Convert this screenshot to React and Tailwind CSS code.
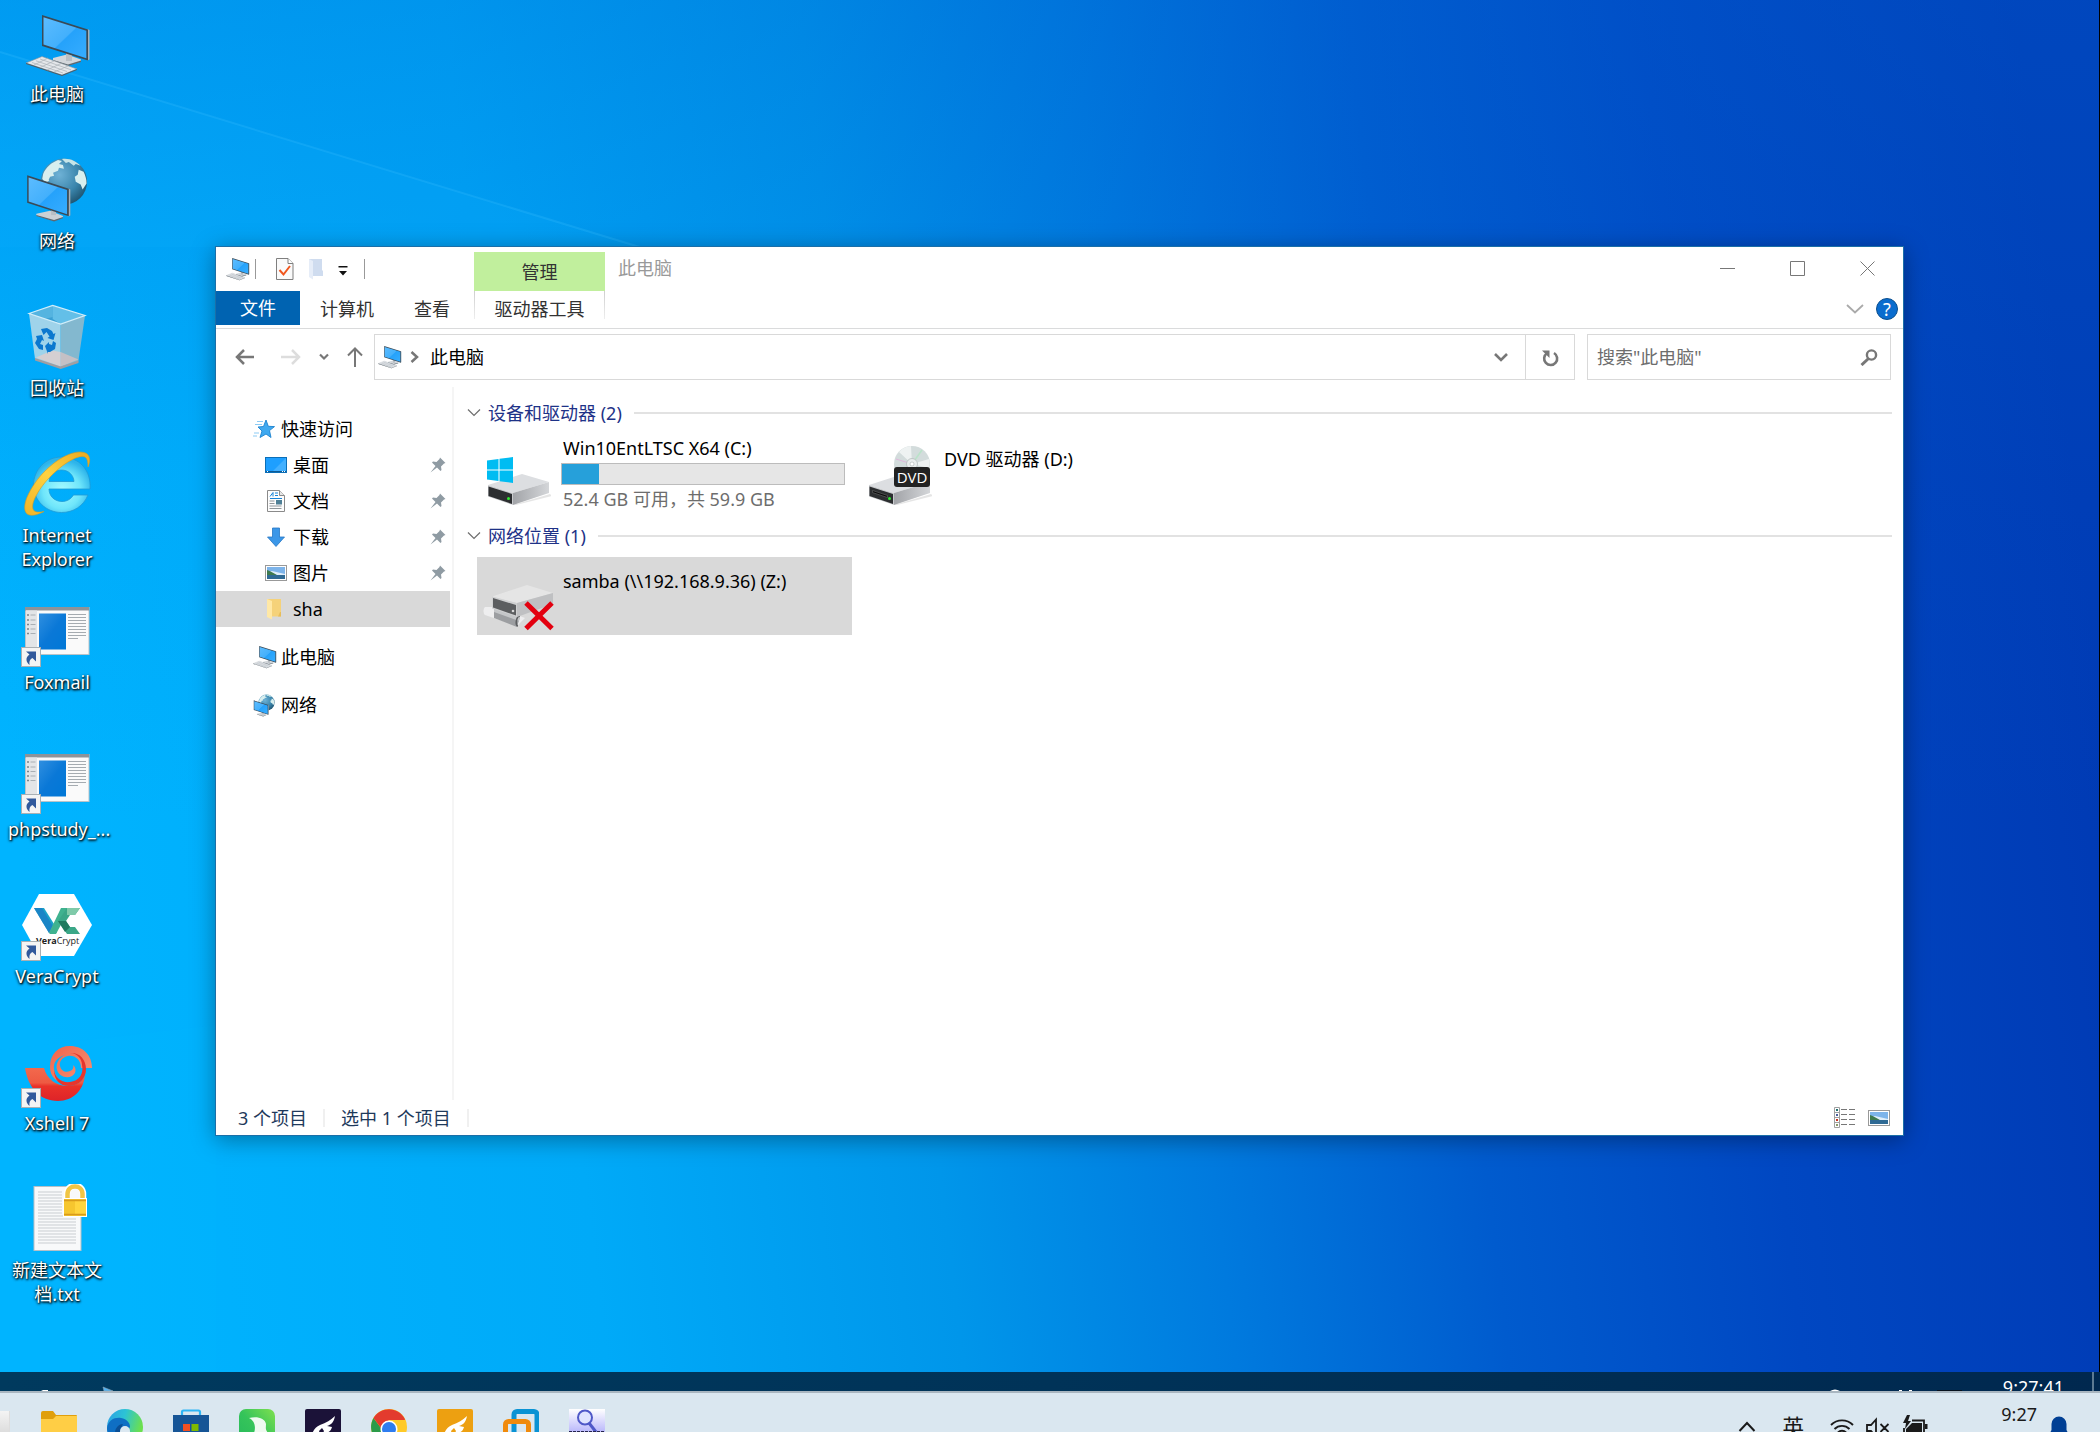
import React from "react";

const PcIcon = ({ className }) => (
  <svg viewBox="4 4 66 64" className={className} aria-hidden="true">
    <defs>
      <linearGradient id="screen" x1="0" y1="0" x2="1" y2="1">
        <stop offset="0" stopColor="#5cbcff" />
        <stop offset="0.5" stopColor="#43b0fc" />
        <stop offset="0.52" stopColor="#25a2fb" />
        <stop offset="1" stopColor="#37adff" />
      </linearGradient>
    </defs>
    <path d="M32 49l14-3.500 14 5v2l-13 4-15-5z" fill="#d3d7db" />
    <path d="M32 51l15 4.500 13-4v1.500l-13 4-15-4.500z" fill="#5d6870" />
    <path d="M45 44h6v8h-6z" fill="#b9bfc4" />
    <path d="M66 20l2.500 1v29.500l-2.500 1z" fill="#a8b0b6" />
    <path d="M21 6l46 14.500v31L21 37z" fill="#3a4a56" />
    <path d="M22.500 8.200L65.300 21.700v27.500L22.500 35.600z" fill="url(#screen)" />
    <path d="M5 54l16-6.500 35 12.500-15 6z" fill="#e4e7ea" stroke="#8b949b" strokeWidth="0.6" />
    <path d="M5 54l36 12 15-6v1l-15 6-36-12z" fill="#4f5a62" />
    <path d="M11 53.500l31 10.500M15 51.800l31 10.700M19 50l31 10.800M13 56l14-7M19 58.500l14-6.500M26 61l14-6.500M33 63l14-6" stroke="#a9b0b6" strokeWidth="0.7" fill="none" />
  </svg>
);

const NetworkIcon = ({ className }) => (
  <svg viewBox="5 2 66 67" className={className} aria-hidden="true">
    <defs>
      <radialGradient id="globe" cx="0.4" cy="0.35" r="0.7">
        <stop offset="0" stopColor="#6fb2d6" />
        <stop offset="0.6" stopColor="#3b86ad" />
        <stop offset="1" stopColor="#1d526e" />
      </radialGradient>
    </defs>
    <circle cx="44" cy="27" r="23.500" fill="url(#globe)" />
    <path d="M23 19c3-7 8-11 15-14l4 1-3 3 4 1 1 4-5-1-1 3-5 2 1 3-4 1-2 4-4 1-2-3z" fill="#d8efef" />
    <path d="M42 4c8-1 14 2 19 7l-5-2-2 2-5-4-3 1z" fill="#c6e5e8" />
    <path d="M59 15l5 2c2 4 3 8 3 12l-4 6-2-5-5-3-1-5 3-2z" fill="#d8efef" />
    <path d="M23 24l4-1 2 3-3 2z" fill="#d8efef" />
    <path d="M16 59.500l14-3 13 5.500v1.500l-9 3.500-18-5.500z" fill="#ccd1d5" />
    <path d="M16 61l18 5 9-3v1.200l-9 3.300-18-5.500z" fill="#5d6870" />
    <path d="M31 55h5v6h-5z" fill="#b9bfc4" />
    <path d="M48 34l2.500 1v26.500l-2.500 1z" fill="#a8b0b6" />
    <path d="M6.700 20.500L49 34.200v28L6.700 48.500z" fill="#3a4a56" />
    <path d="M8.200 22.800l39 12.600v24.600L8.200 47.200z" fill="url(#screen)" />
  </svg>
);

const BinIcon = () => (
  <svg viewBox="0 0 72 72" className="size-full" aria-hidden="true">
    <path d="M8 11.500L31.700 3.500 64 13.500 39.700 22z" fill="#3aa0d4" />
    <path d="M8 11.500L31.700 3.500V15L20 18z" fill="#55b4e0" />
    <path d="M31.700 3.500L64 13.500 39.700 22 31.700 17z" fill="#63bfe8" />
    <path d="M8 11.500L39.700 22v44L14 57z" fill="#9fd3ea" />
    <path d="M64 13.500L39.700 22v44L57.300 59.500z" fill="#83b8cf" />
    <path d="M15 55.500L31 48.500l8.700 1.500v14.500z" fill="#d5cfd2" />
    <path d="M39.700 50L57.500 57.500 39.700 64.500z" fill="#c4c0c5" />
    <path d="M14 56l25.700 8.500 17.800-6v2.500l-17.800 6L14 58.500z" fill="#a09ea2" />
    <path d="M8 11.500L31.700 3.500 64 13.500 39.700 22z" fill="none" stroke="#d2eefa" strokeWidth="1.200" />
    <g fill="#0b78cf">
      <path d="M20 27l6-1 5 3 1.500 3 2-1-2 7-6-2 2-1.500-3-4.500-3 3z" />
      <path d="M15 34l6-1 2 6-2-1-2 4 3 1v5l-4-1-4-6 2-4z" />
      <path d="M24 44l4-4v2l3 1 1-4 3 2-1 6-5 3h-2v2z" />
    </g>
  </svg>
);

const IeIcon = () => (
  <svg viewBox="0 0 72 72" className="size-full" aria-hidden="true">
    <defs>
      <radialGradient id="ie" cx="0.5" cy="0.6" r="0.55">
        <stop offset="0" stopColor="#a8fbff" />
        <stop offset="0.6" stopColor="#6fe6fb" />
        <stop offset="1" stopColor="#2db4ea" />
      </radialGradient>
      <linearGradient id="ring" x1="0" y1="1" x2="1" y2="0">
        <stop offset="0" stopColor="#f0b429" />
        <stop offset="0.5" stopColor="#ffd23f" />
        <stop offset="1" stopColor="#e9a820" />
      </linearGradient>
    </defs>
    <path
      d="M40.500 8C25 8 12.500 20.500 12.500 36S25 63.500 40.500 63.500c12 0 22-6.500 26.500-17.500H52.500c-2.500 4-6.500 6.500-11.500 6.500-7.500 0-13-5.500-13-12.500h41C70.500 21 58 8 40.500 8zM28 32.500C28.500 25.500 34 21 40.500 21S52.500 25.500 53 32.500z"
      fill="url(#ie)"
      stroke="#1f9bd6"
      strokeWidth="0.8"
    />
    <path
      d="M67 18c3-7 2-13-4-14.500C50 0 27 15 14 34 3 50 1 62 7 65.500c4 2 10 0 16-3-5 1-9 1-10.500-1.500C9 56 16 42 28 29 42 14 58 5 64 8c2.500 1.500 3 5 3 10z"
      fill="url(#ring)"
      stroke="#d89a1c"
      strokeWidth="0.6"
    />
  </svg>
);

const ShortcutMark = () => (
  <g>
    <rect x="0.500" y="51.500" width="19" height="19" fill="#f4f4f4" stroke="#a9b0b4" />
    <path d="M5 55.500h10v10l-3.500-3.500c-2.500 1-3.500 3-3 7-3.500-3-4.500-7.500 0-10.500z" fill="#31599c" />
  </g>
);

const AppWindowIcon = () => (
  <svg viewBox="0 0 72 72" className="size-full" aria-hidden="true">
    <defs>
      <linearGradient id="pane" x1="0" y1="0" x2="1" y2="1">
        <stop offset="0" stopColor="#2f8fe0" />
        <stop offset="0.5" stopColor="#0a78d7" />
        <stop offset="1" stopColor="#0078d7" />
      </linearGradient>
    </defs>
    <rect x="4.500" y="11.500" width="63.500" height="47" fill="#fafafa" stroke="#b9c3c9" />
    <rect x="4" y="11" width="64" height="3.500" fill="#8d9399" />
    <rect x="5" y="14.500" width="11" height="43.500" fill="#e3e5e7" />
    <path d="M6 19h2M6 24h2M6 28.500h2M6 33h2M6 37.500h2" stroke="#7d858b" strokeWidth="1.600" />
    <path d="M9.500 19h5M9.500 24h5M9.500 28.500h5M9.500 33h5M9.500 37.500h5" stroke="#a9afb4" strokeWidth="1" />
    <rect x="18" y="17.500" width="27" height="36" fill="url(#pane)" />
    <path d="M47 18.500h18M47 21.500h18M47 24.500h18M47 27.500h18M47 30.500h18M47 33.500h18M47 36.500h18M47 39.500h18M47 42.500h10" stroke="#a5abb0" />
    <ShortcutMark />
  </svg>
);

const VeraIcon = () => (
  <svg viewBox="0 0 72 72" className="size-full" aria-hidden="true">
    <path d="M18 4h35l18 31-18 31H18L1 35z" fill="#fff" />
    <path d="M13 18h10l10 16-5 9z" fill="#1aa3c9" />
    <path d="M13 18l15 25h8L21 18z" fill="#1b77c4" opacity="0.7" />
    <path d="M28 43l12-25h9L35 44h-6z" fill="#3fb28f" />
    <path d="M59 18H46l-9 13 9 13h13l-5-7h-5l-4-6 4-6h5z" fill="#3aa787" />
    <path d="M46 18h13l-5 7h-8z" fill="#7fcaa9" />
    <path d="M37 31l8 0 4 6-5 5z" fill="#1f7a5e" />
    <text x="15" y="53.500" fontSize="9" fill="#222" fontFamily="Open Sans, sans-serif">
      <tspan fontWeight="700">Vera</tspan>Crypt
    </text>
    <ShortcutMark />
  </svg>
);

const XshellIcon = () => (
  <svg viewBox="0 0 72 72" className="size-full" aria-hidden="true">
    <defs>
      <linearGradient id="shell" x1="0" y1="0" x2="0" y2="1">
        <stop offset="0" stopColor="#f2694d" />
        <stop offset="0.45" stopColor="#ee5a42" />
        <stop offset="0.55" stopColor="#ea3229" />
        <stop offset="1" stopColor="#de2328" />
      </linearGradient>
      <linearGradient id="shellTop" x1="0" y1="0" x2="1" y2="1">
        <stop offset="0" stopColor="#f1634a" />
        <stop offset="1" stopColor="#f79478" />
      </linearGradient>
    </defs>
    <path d="M4 31h19c3 11 12 18 24 18 11 0 18-8 18-17l-1 3c0 18-12 29-27 29C18 64 7 50 4 31z" fill="url(#shell)" />
    <path
      d="M71 31H60c0-8-6-13-13-12-6 1-9 6-8 10 1 5 6 7 10 5 3-1 4-4 3-6 4 3 3 9-1 11-6 3-13 0-15-6-2-7 3-13 8-15-8 2-12 8-11 14 1 9 8 15 16 14-11 2-20-5-20-16C29 17 37 9 49 9c13 0 22 9 22 22z"
      fill="url(#shellTop)"
    />
    <path
      d="M33 33c1 8 8 13 16 12 9-1 14-8 12-17 0-6-5-12-12-12 9-1 16 6 16 16 0 9-7 17-17 17-9 0-15-6-15-16z"
      fill="#e8352c"
    />
    <ShortcutMark />
  </svg>
);

const TextFileIcon = () => (
  <svg viewBox="0 0 72 72" className="size-full" aria-hidden="true">
    <rect x="13" y="2.500" width="47" height="64" fill="#f8f9fa" stroke="#b5c0c7" />
    <path
      d="M17 8h24M17 11h24M17 14h24M17 17h24M17 20h24M17 23h24M17 26h24M17 29h24M17 32h38M17 35h38M17 38h38M17 41h38M17 44h38M17 47h38M17 50h38M17 53h38M17 56h38M17 59h38"
      stroke="#c9cdd1"
    />
    <path d="M46 15V10c0-11 16-11 16 0v5" fill="none" stroke="#fff" strokeWidth="6.500" />
    <path d="M46.500 16V10c0-10 15-10 15 0v6" fill="none" stroke="#f0c544" strokeWidth="4.500" />
    <rect x="42" y="14" width="24" height="19" fill="#fff" />
    <rect x="43" y="15" width="22" height="17" fill="#f6c62f" />
    <rect x="54" y="17" width="11" height="13" fill="#ffd53e" />
    <path d="M43 16.500h22M43 30.500h22" stroke="#d99b1c" strokeWidth="1.500" />
  </svg>
);

const PictureIcon = ({ className }) => (
  <svg viewBox="0 0 22 16" className={className} aria-hidden="true">
    <rect x="0.500" y="0.500" width="21" height="15" fill="#fff" stroke="#999" />
    <rect x="2" y="2" width="18" height="12" fill="#7db4ea" />
    <path d="M2 7l5-1 13 3v2H2z" fill="#dfeefa" />
    <path d="M2 5c4 1 6 3 10 5H2z" fill="#3f7a4f" />
    <path d="M2 10h18v4H2z" fill="#2f6a94" />
  </svg>
);

const StarIcon = () => (
  <svg viewBox="0 0 22 20" className="w-[22px] h-5" aria-hidden="true">
    <path d="M13 1l2.300 6.300 6.200.3-5 4 1.500 6.900-5-3.500-6 3.500 2-6.500-4-4 5.500-.5z" fill="#3fa9f0" stroke="#1c82cf" strokeWidth="0.900" />
    <path d="M4 2.500h6M2 5.500h7M1 14h5M0 17h4" stroke="#8ccbf4" strokeWidth="1" />
  </svg>
);

const DesktopIcon = () => (
  <svg viewBox="0 0 22 16" className="w-[22px] h-4" aria-hidden="true">
    <rect x="0.500" y="0.500" width="21" height="15" fill="#1e9fff" stroke="#0b6fb8" />
    <path d="M8 14L21 1v13z" fill="#43b0ff" />
    <path d="M1 14.500h20" stroke="#0d5a94" />
    <path d="M2 14.500h1M17 14.500h1M19 14.500h1" stroke="#fff" />
  </svg>
);

const DocumentIcon = () => (
  <svg viewBox="0 0 18 22" className="w-[18px] h-[22px]" aria-hidden="true">
    <path d="M.5.500h12l5 5v16H.500z" fill="#fdfdfd" stroke="#8a8a8a" />
    <path d="M12.500.500v5h5" fill="#e6e6e6" stroke="#8a8a8a" />
    <path d="M3 6.500l3-4v4M8 3h3M8 5.500h3M3 8.500h12" stroke="#1583d8" fill="none" />
    <path d="M2.500 11h5M2.500 13.500h5M2.500 16h12M2.500 18.500h12" stroke="#8f959a" />
    <rect x="9" y="10" width="6" height="4.500" fill="#4e7f96" />
  </svg>
);

const DownloadIcon = () => (
  <svg viewBox="0 0 20 20" className="size-5" aria-hidden="true">
    <path d="M6.500 1h7v9h5L10 19.500 1.500 10h5z" fill="#3b97e8" stroke="#2677c4" strokeWidth="0.800" />
  </svg>
);

const FolderIcon = () => (
  <svg viewBox="0 0 16 22" className="mr-1 w-4 h-[22px]" aria-hidden="true">
    <path d="M1 1h14v17.500H1z" fill="#f5d27a" />
    <path d="M1 1l5 2v18.500L1 19z" fill="#ffe8a6" />
    <path d="M14 14h1v4.500h-3z" fill="#e7bd5b" />
  </svg>
);

const PinIcon = () => (
  <svg viewBox="0 0 16 16" className="size-4" aria-hidden="true">
    <path d="M10 .5L15.500 6l-1.500.5-3 3 .5 3.500-1 1-3.500-3.500L.500 15.500 5.500 9 2 5.500l1-1 3.500.5 3-3z" fill="#8f9ba3" />
  </svg>
);

const DriveBody = ({ slot }) => (
  <g>
    <path d="M26 64l37-11 2 2-36 9z" fill="#000" opacity="0.1" />
    <path d="M1 44L35 33l27 8-36 11z" fill="#dcdee1" />
    <path d="M26 52l36-11v11L26 64z" fill="url(#driveSide)" />
    <path d="M1 44l25 8v12L1 55.500z" fill="#c9cbce" />
    <path d="M1.500 45.500l23.500 7.500v10l-23.500-8z" fill="#2c2e30" />
    {slot && <path d="M4.500 49.500l15 5v2l-15-5z" fill="#0a0a0a" stroke="#777" strokeWidth="0.500" />}
    <circle cx="21.500" cy="57.500" r="1.500" fill="#2ee82e" />
  </g>
);

const SystemDriveIcon = () => (
  <svg viewBox="0 0 64 64" className="size-16" aria-hidden="true">
    <defs>
      <linearGradient id="driveSide" x1="0" y1="0" x2="1" y2="0">
        <stop offset="0" stopColor="#a2a4a8" />
        <stop offset="1" stopColor="#d4d6d9" />
      </linearGradient>
    </defs>
    <DriveBody />
    <path d="M0 19.500L11.500 18v10.500H0zM12.500 17.800L26 16v12.500H12.500zM0 29.500h11.500V40L0 38.500zM12.500 29.500H26V42l-13.500-1.800z" fill="#00bcf2" />
  </svg>
);

const DvdDriveIcon = () => (
  <svg viewBox="0 0 64 64" className="size-16" aria-hidden="true">
    <DriveBody slot />
    <circle cx="44" cy="23" r="18" fill="#d3dcdc" />
    <path d="M44 23L31 11a18 18 0 0 1 12-6zM44 23l17-5a18 18 0 0 1 0 9z" fill="#eef2f2" />
    <path d="M44 23l-16-5M44 23l-14 8" stroke="#e0b8dc" strokeWidth="1" />
    <path d="M44 23l10-14" stroke="#b9e3c8" strokeWidth="1.500" />
    <circle cx="44" cy="23" r="5.500" fill="#e9eded" stroke="#b5bdbd" strokeWidth="0.800" />
    <circle cx="44" cy="23" r="2" fill="#fff" stroke="#a9b1b1" strokeWidth="0.600" />
    <rect x="26" y="26" width="36" height="20" rx="3" fill="#222" />
    <text x="44" y="41.500" textAnchor="middle" fontSize="15" fill="#fff" fontFamily="Open Sans, sans-serif">DVD</text>
  </svg>
);

const OfflineDriveIcon = () => (
  <svg viewBox="0 0 64 64" className="size-16 overflow-visible" aria-hidden="true">
    <path d="M-2 43c-2 2-2 6 0 8l32 11 8-8-30-11z" fill="#eeeeef" />
    <path d="M7 44l26 9-3 10-23-9z" fill="#9c9ea1" />
    <path d="M7 44l26 9-1 4-25-9z" fill="#c4c6c8" />
    <path d="M33 52c-4 0-5 10-2 10" fill="none" stroke="#5c5e60" strokeWidth="1.600" />
    <path d="M5 32.500L40 21l26 8-36 10z" fill="#e5e5e5" />
    <path d="M30 39l36-10v11L30 53z" fill="#bfc0c2" />
    <path d="M5 32.500L30 39v14L5 44.500z" fill="#cfd0d1" />
    <path d="M6 34l23 7v10.500l-23-8z" fill="#5c5e60" />
    <circle cx="26" cy="47" r="1.300" fill="#d8d8d8" />
    <path d="M39 39l26 25.500M65 39L39 64.500" stroke="#e3000f" strokeWidth="5" />
  </svg>
);

const desktopItems = [
  { label: "此电脑", icon: <PcIcon className="ml-[4px] mt-[4px] size-[66px]" /> },
  { label: "网络", icon: <NetworkIcon className="ml-[4px] mt-[2px] size-[66px]" /> },
  { label: "回收站", icon: <BinIcon /> },
  { label: "Internet Explorer", icon: <IeIcon /> },
  { label: "Foxmail", icon: <AppWindowIcon /> },
  { label: "phpstudy_...", icon: <AppWindowIcon /> },
  { label: "VeraCrypt", icon: <VeraIcon /> },
  { label: "Xshell 7", icon: <XshellIcon /> },
  { label: "新建文本文档.txt", icon: <TextFileIcon /> },
];

const quickAccess = [
  { label: "桌面", icon: <DesktopIcon />, pinned: true },
  { label: "文档", icon: <DocumentIcon />, pinned: true },
  { label: "下载", icon: <DownloadIcon />, pinned: true },
  { label: "图片", icon: <PictureIcon className="w-[22px] h-4" />, pinned: true },
  { label: "sha", icon: <FolderIcon />, selected: true },
];

const Wallpaper = () => (
  <svg viewBox="0 0 2100 1372" preserveAspectRatio="none" className="absolute inset-0 size-full" aria-hidden="true">
    <defs>
      <linearGradient id="wall" gradientUnits="userSpaceOnUse" x1="0" y1="686" x2="2070" y2="436">
        <stop offset="0" stopColor="#00b4ff" />
        <stop offset="0.25" stopColor="#00aaf8" />
        <stop offset="0.42" stopColor="#0096ea" />
        <stop offset="0.55" stopColor="#007ade" />
        <stop offset="0.68" stopColor="#005bce" />
        <stop offset="0.82" stopColor="#0047c2" />
        <stop offset="1" stopColor="#003ab4" />
      </linearGradient>
      <linearGradient id="wallTop" x1="0" y1="0" x2="0" y2="1">
        <stop offset="0" stopColor="#0064d4" stopOpacity="0.3" />
        <stop offset="0.35" stopColor="#0070dc" stopOpacity="0.08" />
        <stop offset="0.6" stopColor="#0070dc" stopOpacity="0" />
      </linearGradient>
    </defs>
    <rect width="2100" height="1372" fill="url(#wall)" />
    <rect width="2100" height="1372" fill="url(#wallTop)" />
    <path d="M0 52L640 247H0z" fill="#10b0ff" opacity="0.14" />
    <path d="M0 52L640 247" stroke="#3cc0ff" strokeWidth="2" opacity="0.25" />
    <path d="M0 1050L216 1025V1372H0z" fill="#00c0ff" opacity="0.08" />
  </svg>
);

const DesktopItem = ({ label, icon }) => (
  <button className="flex h-[147px] w-[114px] flex-col items-center pt-2">
    <span className="block size-[72px] shrink-0">{icon}</span>
    <span className="mt-[2px] w-[98px] text-center leading-6 text-white [text-shadow:1px_1px_2px_#000,0_1px_3px_#000]">
      {label}
    </span>
  </button>
);

const TitleBar = () => (
  <div className="flex h-11">
    <div className="flex w-[258px] items-center pl-[10px]">
      <PcIcon className="size-6" />
      <span className="ml-[5px] h-5 w-px bg-[#999]" />
      <button aria-label="属性" className="ml-5">
        <svg viewBox="0 0 18 22" className="w-[18px] h-[22px]" aria-hidden="true">
          <path d="M.5.500h11.500l5 5v16H.500z" fill="#fafafa" stroke="#7f7f7f" />
          <path d="M12 .5v5h5" fill="#fff" stroke="#7f7f7f" />
          <path d="M3.500 12l4 4.500L14 8" fill="none" stroke="#f0561d" strokeWidth="2" />
        </svg>
      </button>
      <button aria-label="新建文件夹" className="ml-[14px]">
        <svg viewBox="0 0 16 22" className="w-4 h-[22px]" aria-hidden="true">
          <path d="M1 1h13v11l1 1v5H4z" fill="#cfdcef" />
          <path d="M1 1l4 2v18.500L1 19z" fill="#e6edf8" />
        </svg>
      </button>
      <button aria-label="自定义快速访问工具栏" className="ml-[14px]">
        <svg viewBox="0 0 10 10" className="mt-1 size-[10px]" aria-hidden="true">
          <path d="M.5 0h9v1.500H.500zM1 5h8l-4 4.500z" fill="#111" />
        </svg>
      </button>
      <span className="ml-4 h-5 w-px bg-[#999]" />
    </div>
    <button className="mt-[5px] h-[39px] w-[131px] bg-[#c1ef9d] text-[#333]">管理</button>
    <h1 className="ml-[13px] leading-[42px] text-[#999]">此电脑</h1>
    <div className="ml-auto flex h-[43px] items-center text-[#777]">
      <button aria-label="最小化" className="flex h-full w-[70px] items-center justify-center">
        <svg viewBox="0 0 16 16" className="size-4"><path d="M0 7.500h15" stroke="currentColor" /></svg>
      </button>
      <button aria-label="最大化" className="flex h-full w-[70px] items-center justify-center">
        <svg viewBox="0 0 16 16" className="size-4"><path d="M.5.500h14v14H.500z" stroke="currentColor" fill="none" /></svg>
      </button>
      <button aria-label="关闭" className="flex h-full w-[70px] items-center justify-center">
        <svg viewBox="0 0 16 16" className="size-4"><path d="M.5.500l14 14M14.500.500l-14 14" stroke="currentColor" /></svg>
      </button>
    </div>
  </div>
);

const RibbonTabs = () => (
  <div className="flex h-[38px] border-b border-[#dadbdc] text-[#333]">
    <button className="h-[34px] w-[84px] bg-[#0063b1] text-white">文件</button>
    <button className="h-[35px] px-5">计算机</button>
    <button className="h-[35px] px-5">查看</button>
    <div className="ml-[4px] h-7 w-[131px] bg-linear-to-b from-[#cfcfcf] to-[#eee] px-px">
      <button className="h-full w-full bg-white pt-1">驱动器工具</button>
    </div>
    <div className="ml-auto flex h-[35px] items-center gap-3 pr-[5px]">
      <button aria-label="展开功能区">
        <svg viewBox="0 0 18 10" className="w-[18px] h-[10px]"><path d="M1 1l8 7.500L17 1" stroke="#aaa" strokeWidth="1.800" fill="none" /></svg>
      </button>
      <button aria-label="帮助" className="flex size-[22px] items-center justify-center rounded-full border border-[#0a4f8f] bg-[#0a6cce] leading-5 text-white">
        ?
      </button>
    </div>
  </div>
);

const AddressBar = () => (
  <div className="flex h-[51px] shrink-0 pr-3 pt-[5px]">
    <div className="flex w-[158px] items-center pl-[19px]">
      <button aria-label="后退">
        <svg viewBox="0 0 20 16" className="w-5 h-4"><path d="M9 1L2 8l7 7M2 8h17" stroke="#777" strokeWidth="2.500" fill="none" /></svg>
      </button>
      <button aria-label="前进" className="ml-[26px]">
        <svg viewBox="0 0 20 16" className="w-5 h-4"><path d="M11 1l7 7-7 7M18 8H0" stroke="#ddd" strokeWidth="2.500" fill="none" /></svg>
      </button>
      <button aria-label="最近浏览的位置" className="ml-[18px]">
        <svg viewBox="0 0 10 8" className="w-[10px] h-2"><path d="M1 1.500l4 4 4-4" stroke="#777" strokeWidth="2.200" fill="none" /></svg>
      </button>
      <button aria-label="上移" className="ml-[18px]">
        <svg viewBox="0 0 16 20" className="w-4 h-5"><path d="M1 8.500L8 1.500l7 7M8 1.500V20" stroke="#777" strokeWidth="2" fill="none" /></svg>
      </button>
    </div>
    <div className="flex flex-1 items-center border border-[#d9d9d9] pl-[3px]">
      <PcIcon className="size-6" />
      <svg viewBox="0 0 10 12" className="ml-[8px] w-[10px] h-3" aria-hidden="true"><path d="M1.500 1l5.500 5-5.500 5" stroke="#777" strokeWidth="2.500" fill="none" /></svg>
      <button className="ml-[10px] text-black">此电脑</button>
      <button aria-label="历史记录" className="ml-auto flex h-full w-12 items-center justify-center">
        <svg viewBox="0 0 14 10" className="w-[14px] h-[10px]"><path d="M1 2l6 6 6-6" stroke="#777" strokeWidth="2.600" fill="none" /></svg>
      </button>
      <button aria-label="刷新" className="flex h-full w-[49px] items-center justify-center border-l border-[#d9d9d9]">
        <svg viewBox="0 0 17 17" className="mt-[2px] size-[17px]">
          <path d="M5 3.200A6.500 6.500 0 1 0 12 3" stroke="#777" strokeWidth="2.600" fill="none" />
          <path d="M0 .5h7.500V8z" fill="#777" />
        </svg>
      </button>
    </div>
    <label className="ml-3 flex w-[304px] items-center border border-[#d9d9d9] pl-[9px] pr-3">
      <input
        type="search"
        aria-label="搜索"
        placeholder={'搜索"此电脑"'}
        className="min-w-0 flex-1 bg-transparent outline-none placeholder:text-[#6d6d6d]"
      />
      <svg viewBox="0 0 18 17" className="w-[18px] h-[17px]" aria-hidden="true">
        <circle cx="11.500" cy="6" r="4.600" stroke="#777" strokeWidth="2.400" fill="none" />
        <path d="M8.500 9.500L1.500 16" stroke="#777" strokeWidth="3" />
      </svg>
    </label>
  </div>
);

const Sidebar = () => (
  <nav className="w-[238px] shrink-0 border-r-2 border-[#f5f5f5] pt-6 text-black">
    <a href="#quick" className="flex h-9 items-center pl-[37px]">
      <StarIcon />
      <span className="ml-[6px]">快速访问</span>
    </a>
    {quickAccess.map((item) => (
      <a
        key={item.label}
        href="#folder"
        className={`mr-[2px] flex h-9 items-center pl-[49px] pr-1 ${item.selected ? "bg-[#d9d9d9]" : ""}`}
      >
        <span className="flex w-[22px] justify-center">{item.icon}</span>
        <span className="ml-[6px] flex-1">{item.label}</span>
        {item.pinned && <PinIcon />}
      </a>
    ))}
    <a href="#pc" className="mt-3 flex h-9 items-center pl-[37px]">
      <PcIcon className="size-6" />
      <span className="ml-1">此电脑</span>
    </a>
    <a href="#network" className="mt-3 flex h-9 items-center pl-[37px]">
      <NetworkIcon className="size-[23px]" />
      <span className="ml-[5px]">网络</span>
    </a>
  </nav>
);

const Group = ({ title, children }) => (
  <section>
    <h2 className="flex h-[42px] items-center text-[#1e3287]">
      <svg viewBox="0 0 14 8" className="mr-[7px] w-[14px] h-2" aria-hidden="true"><path d="M1 0.500l6 6 6-6" stroke="#6d6d6d" strokeWidth="1.200" fill="none" /></svg>
      {title}
      <span className="ml-3 h-[2px] flex-1 bg-[#e2e2e2]" />
    </h2>
    <div className="ml-[10px] flex gap-[6px]">{children}</div>
  </section>
);

const Tile = ({ icon, children, className = "" }) => (
  <button className={`flex h-[78px] w-[375px] items-start pl-[10px] pr-[7px] pt-[7px] text-left text-black ${className}`}>
    {icon}
    {children}
  </button>
);

const ExplorerWindow = () => (
  <div className="absolute bottom-[236px] left-[215px] right-[195px] top-[246px] flex flex-col border border-[#1b6fa8] bg-white shadow-[0_4px_22px_rgba(0,0,0,0.35)]">
    <TitleBar />
    <RibbonTabs />
    <AddressBar />
    <div className="mt-[7px] flex min-h-0 flex-1">
      <Sidebar />
      <main className="flex flex-1 flex-col gap-[3px] pl-[13px] pr-[11px] pt-[5px]">
        <Group title="设备和驱动器 (2)">
          <Tile icon={<SystemDriveIcon />}>
            <div className="-mt-[5px] ml-[10px] flex-1">
              <p className="ml-[2px] leading-6">Win10EntLTSC X64 (C:)</p>
              <div className="mt-[3px] h-[22px] border border-[#bcbcbc] bg-[#e6e6e6]">
                <div className="h-full w-[13%] bg-[#26a0da]" />
              </div>
              <p className="ml-[2px] mt-[2px] leading-6 text-[#6d6d6d]">52.4 GB 可用，共 59.9 GB</p>
            </div>
          </Tile>
          <Tile icon={<DvdDriveIcon />}>
            <p className="ml-3 mt-[6px] leading-6">DVD 驱动器 (D:)</p>
          </Tile>
        </Group>
        <Group title="网络位置 (1)">
          <Tile icon={<OfflineDriveIcon />} className="bg-[#d9d9d9]">
            <p className="ml-3 mt-[5px] leading-6">samba (\\192.168.9.36) (Z:)</p>
          </Tile>
        </Group>
      </main>
    </div>
    <footer className="flex h-[35px] items-center pl-[22px] pr-[13px] text-[#1e395b]">
      <span>3 个项目</span>
      <span className="ml-4 h-[18px] w-[2px] bg-[#f0f0f0]" />
      <span className="ml-4">选中 1 个项目</span>
      <span className="ml-4 h-[18px] w-[2px] bg-[#f0f0f0]" />
      <button aria-label="详细信息" className="ml-auto">
        <svg viewBox="0 0 22 22" className="size-[22px]" aria-hidden="true">
          <path d="M.5.500h5v20h-5zM.500 5.500h5M.500 10.500h5M.500 15.500h5" fill="#fff" stroke="#a0a0a0" />
          <path d="M2 3h2" stroke="#1d6f6f" strokeWidth="2" />
          <path d="M2 8h2" stroke="#4a5f9c" strokeWidth="2" />
          <path d="M2 13h2" stroke="#c8321e" strokeWidth="2" />
          <path d="M2 18h2" stroke="#8a9a6a" strokeWidth="2" />
          <path d="M7 2.500h6M15 2.500h6M7 7.500h6M15 7.500h6M7 12.500h6M15 12.500h6M7 17.500h6M15 17.500h6" stroke="#777" />
        </svg>
      </button>
      <button aria-label="大图标" className="ml-3">
        <PictureIcon className="w-[22px] h-4" />
      </button>
    </footer>
  </div>
);

const taskbarApps = [
  {
    label: "文件资源管理器",
    icon: (
      <>
        <path d="M0 4a2 2 0 0 1 2-2h10l3 4h20a1 1 0 0 1 1 1v29H0z" fill="#e09f0c" />
        <path d="M0 10h12l3-3h21v29H0z" fill="#ffce45" />
        <path d="M10 28a1 1 0 0 1 1-1h15a1 1 0 0 1 1 1v8H10z" fill="#e9a51c" />
      </>
    ),
  },
  {
    label: "Microsoft Edge",
    icon: (
      <>
        <circle cx="18" cy="18" r="18" fill="url(#edge)" />
        <path d="M0 19c1-8 8-11 14-10 6 1 9 5 9 9l-3 5-6 13C5 34 0 27 0 19z" fill="#0f6fc4" />
        <path d="M8 24c0-5 4-9 8-9-2 3-2 8 2 13l-2 8c-5-1-8-6-8-12z" fill="#0a4f96" />
        <circle cx="18" cy="22" r="5" fill="#dce8f1" />
      </>
    ),
  },
  {
    label: "Microsoft Store",
    icon: (
      <>
        <path d="M9 6V3a1.500 1.500 0 0 1 1.500-1.500h15A1.500 1.500 0 0 1 27 3v3" fill="none" stroke="#2fb6f5" strokeWidth="2.200" />
        <path d="M0 6h36v30H0z" fill="#165596" />
        <path d="M10 15h7v7h-7z" fill="#f25022" />
        <path d="M18.500 15h7v7h-7z" fill="#7fba00" />
        <path d="M10 23.500h7v7h-7z" fill="#00a4ef" />
        <path d="M18.500 23.500h7v7h-7z" fill="#ffb900" />
      </>
    ),
  },
  {
    label: "Evernote",
    icon: (
      <>
        <rect width="36" height="40" rx="7" fill="url(#green)" />
        <path d="M10 9c8-2 16 0 17 6 0 4-1 5 2 9v14H14c-4-5-4-9 1-14 2-6 1-12-5-15z" fill="#eefaf0" />
      </>
    ),
  },
  {
    label: "Navicat",
    icon: (
      <>
        <rect width="36" height="40" rx="2" fill="#1b1238" />
        <path d="M30 7c-1 6-4 9-8 10l5 1c-1 4-3 5-6 6l-3 12H6c-1-9 2-17 9-20 6-2 11-5 15-9z" fill="#fff" />
        <path d="M14 22l3-3 2 3-3 6z" fill="#1b1238" />
      </>
    ),
  },
  {
    label: "Google Chrome",
    icon: (
      <>
        <circle cx="18" cy="18" r="18" fill="#ffca28" />
        <path d="M2.500 9A18 18 0 0 0 18 36l5-9-13-8z" fill="#2b9b4a" />
        <path d="M2.500 9A18 18 0 0 1 33.600 9.500L34 11H18l-8 8z" fill="#e33b2e" />
        <circle cx="18" cy="20" r="8.500" fill="#fff" />
        <circle cx="18" cy="20" r="7" fill="#2f7df0" />
      </>
    ),
  },
  {
    label: "Navicat Premium",
    icon: (
      <>
        <rect width="36" height="40" rx="2" fill="#eda011" />
        <path d="M30 7c-1 6-4 9-8 10l5 1c-1 4-3 5-6 6l-3 12H6c-1-9 2-17 9-20 6-2 11-5 15-9z" fill="#fff" />
        <path d="M14 22l3-3 2 3-3 6z" fill="#eda011" />
      </>
    ),
  },
  {
    label: "VMware Workstation",
    icon: (
      <>
        <rect x="11" y="2.500" width="23" height="23" rx="3" fill="none" stroke="#0a93d4" strokeWidth="5" />
        <rect x="2.500" y="12.500" width="23" height="23" rx="3" fill="none" stroke="#f08a0c" strokeWidth="5" />
      </>
    ),
  },
  {
    label: "搜索工具",
    icon: (
      <>
        <rect width="36" height="40" fill="url(#violet)" />
        <circle cx="16" cy="8.500" r="7" fill="#dfe4ff" stroke="#4f58c8" strokeWidth="2" />
        <path d="M20 14l7 9" stroke="#4f58c8" strokeWidth="3" />
        <path d="M0 22.500h36" stroke="#26264f" strokeDasharray="3 1" />
      </>
    ),
  },
];

const GuestTaskbar = () => (
  <div className="flex h-[19px] shrink-0 overflow-hidden bg-linear-to-r from-[#003a5e] via-[#003358] to-[#00284f] text-white">
    <svg viewBox="0 0 120 19" className="h-[19px] w-[120px]" aria-hidden="true">
      <path d="M41 19l2-1h5v1z" fill="#fff" />
      <path d="M103 15l10 4h-9z" fill="#4fb3f5" stroke="#8fa3b0" strokeWidth="0.600" />
    </svg>
    <svg viewBox="0 0 140 19" className="ml-auto h-[19px] w-[140px]" aria-hidden="true">
      <path d="M0 19q5-3 10 0zM69 18h3v1h-3zM79 18h3v1h-3z" fill="#fff" />
      <path d="M107 18h25v1h-25z" fill="#07111d" />
    </svg>
    <span className="ml-[33px] h-6 leading-[30px]">9:27:41</span>
    <span className="ml-[28px] mr-[6px] w-[2px] bg-[#5c7a93]" />
  </div>
);

const HostTaskbar = () => (
  <div className="flex h-[41px] shrink-0 items-start overflow-hidden border-t-2 border-[#a9b6c0] bg-[#dae7f0] text-[#1a1a1a]">
    <svg className="absolute size-0" aria-hidden="true">
      <defs>
        <linearGradient id="edge" x1="0" y1="0" x2="1" y2="0.300">
          <stop offset="0" stopColor="#2b9fe6" />
          <stop offset="0.5" stopColor="#2cc3d5" />
          <stop offset="1" stopColor="#6be04f" />
        </linearGradient>
        <linearGradient id="green" x1="0" y1="1" x2="1" y2="0">
          <stop offset="0" stopColor="#25b85c" />
          <stop offset="0.5" stopColor="#35c45a" />
          <stop offset="1" stopColor="#7fe04f" />
        </linearGradient>
        <linearGradient id="violet" x1="0" y1="0" x2="0" y2="1">
          <stop offset="0" stopColor="#fff" />
          <stop offset="0.6" stopColor="#b6b4fb" />
          <stop offset="1" stopColor="#b6b4fb" />
        </linearGradient>
      </defs>
    </svg>
    <span className="mt-[18px] h-10 w-[10px] shrink-0 border-r border-[#ddd] bg-linear-to-b from-[#f4f4f4] to-[#c9c9c9]" />
    <div className="ml-[31px] flex gap-[30px] pt-4">
      {taskbarApps.map((app) => (
        <button key={app.label} aria-label={app.label} className="size-9">
          <svg viewBox="0 0 36 36" className="size-9">{app.icon}</svg>
        </button>
      ))}
    </div>
    <div className="ml-auto flex items-start">
      <button aria-label="显示隐藏的图标" className="mt-7">
        <svg viewBox="0 0 18 12" className="w-[18px] h-3"><path d="M1.500 10L9 2l7.500 8" stroke="currentColor" strokeWidth="2" fill="none" /></svg>
      </button>
      <button className="ml-[26px] mt-[17px] text-[22px] leading-[32px]">英</button>
      <button aria-label="网络" className="ml-[26px] mt-[24px]">
        <svg viewBox="0 0 24 20" className="w-6 h-5">
          <path d="M1 8a15.500 15.500 0 0 1 22 0M4.500 12a10.500 10.500 0 0 1 15 0M8 15.500a5.500 5.500 0 0 1 8 0" stroke="currentColor" strokeWidth="1.900" fill="none" />
        </svg>
      </button>
      <button aria-label="音量" className="ml-3 mt-[24px]">
        <svg viewBox="0 0 24 22" className="w-6 h-[22px]">
          <path d="M1 8h4l5-5.500v17L5 14H1zM14.500 7l8 8M22.500 7l-8 8" stroke="currentColor" strokeWidth="1.800" fill="none" />
        </svg>
      </button>
      <button aria-label="电池" className="ml-3 mt-[22px]">
        <svg viewBox="0 0 26 22" className="w-[26px] h-[22px]">
          <path d="M10 5.500h12v15H2V13" stroke="currentColor" strokeWidth="1.800" fill="none" />
          <path d="M10 8h10v11H4v-5zM23 9h2.500v5H23z" fill="currentColor" />
          <path d="M5 0L1 8h3l-1 6 6-8H6l2-6z" fill="currentColor" />
        </svg>
      </button>
      <time className="ml-[73px] mt-[9px] leading-6">9:27</time>
      <button aria-label="通知" className="ml-3 mr-[31px] mt-[22px]">
        <svg viewBox="0 0 20 22" className="w-5 h-[22px]"><path d="M2.500 9a7.500 7.500 0 0 1 15 0v6l2 4H.5l2-4z" fill="#003f94" /></svg>
      </button>
    </div>
  </div>
);

const App = () => {
  return (
    <div className="flex h-screen flex-col overflow-hidden font-['Noto_Sans','Noto_Sans_CJK_SC',sans-serif] text-lg">
      <div className="relative min-h-0 flex-1 overflow-hidden border-r border-black">
        <Wallpaper />
        <div className="relative flex flex-col items-start">
          {desktopItems.map((item) => (
            <DesktopItem key={item.label} {...item} />
          ))}
        </div>
        <ExplorerWindow />
      </div>
      <GuestTaskbar />
      <HostTaskbar />
    </div>
  );
};

export default App;
